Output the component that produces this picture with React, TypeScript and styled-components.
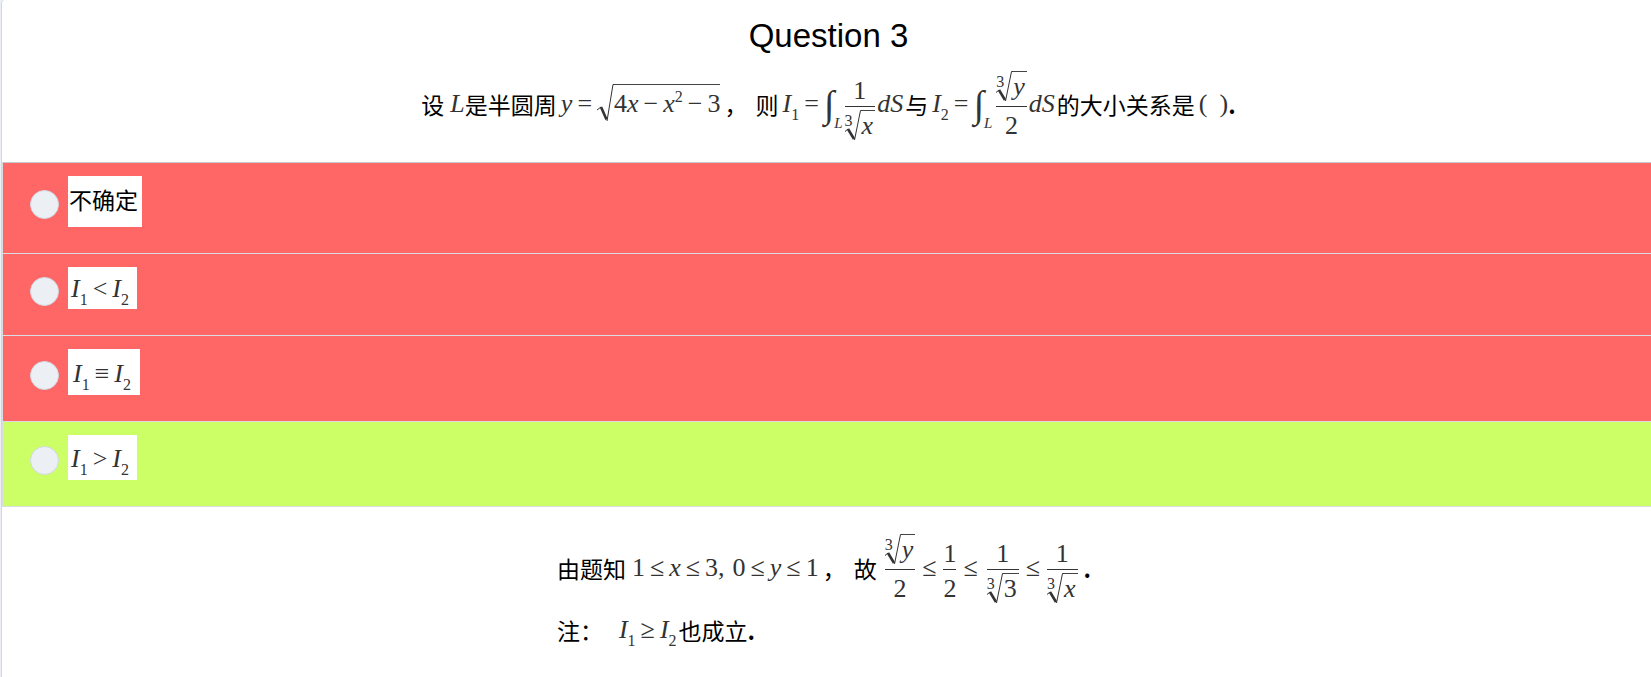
import React from 'react';
import styled, { createGlobalStyle } from 'styled-components';

const GlobalStyle = createGlobalStyle`
  * { box-sizing: border-box; }
  body {
    margin: 0;
    background: #ecf0f5;
    color: #000;
    font-family: "Liberation Sans", Arial, sans-serif;
    overflow-x: hidden;
  }
`;

const Panel = styled.main`
  min-height: 100vh;
  margin-left: 1px;
  border-left: 1px solid #d2d6de;
  border-top-left-radius: 4px;
  background: #fff;
`;

const Header = styled.header`
  display: flex;
  flex-direction: column;
  align-items: center;
  padding: 17px 0 13px 4px;
`;

const Title = styled.h1`
  margin: 0;
  font-size: 33px;
  font-weight: 400;
  line-height: 38px;
`;

const MathLine = styled.div`
  display: flex;
  align-items: center;
  white-space: nowrap;
  font-family: "Liberation Serif", "Noto Sans CJK SC", serif;
  font-size: 26px;
  line-height: 30px;
  color: #333;
`;

const QuestionLine = styled(MathLine)`
  min-height: 94px;
  padding-top: 4px;
`;

const Cjk = styled.span`
  font-family: "Noto Sans CJK SC", sans-serif;
  font-size: 23px;
  font-weight: 400;
  color: #000;
`;

const Stop = styled(Cjk)`
  font-weight: 700;
`;

const Var = styled.i`
  font-style: italic;
`;

const Rel = styled.span`
  margin: 0 5px;
`;

const Space = styled.span<{ $w: number }>`
  flex: none;
  width: ${(p) => p.$w}px;
`;

const Sub = styled.span`
  font-size: 16px;
  line-height: 0;
  vertical-align: -8px;
`;

const Sup = styled.span`
  font-size: 16px;
  line-height: 0;
  vertical-align: 10px;
`;

const RootBox = styled.span`
  display: inline-flex;
  align-items: flex-start;
`;

const FractionBox = styled.span`
  display: inline-grid;
  grid-template-rows: 1fr 1px 1fr;
  justify-items: center;
  padding-top: 4px;
`;

const Numerator = styled.span`
  display: flex;
  align-self: end;
  ${RootBox} { padding-bottom: 4px; }
`;

const Denominator = styled.span`
  display: flex;
  align-self: start;
  padding-top: 4px;
  ${RootBox} { margin-top: -4px; }
`;

const Bar = styled.span`
  justify-self: stretch;
  background: #333;
`;

const Radicand = styled.span<{ $tall?: boolean }>`
  border-top: 1px solid #444;
  padding: ${(p) => (p.$tall ? '4px 0 5px' : '0')};
`;

const CubeRadicand = styled(Radicand)`
  margin-top: 3px;
  padding-right: 2px;
`;

const RootIndex = styled.span`
  width: 8px;
  margin: 6px -8px 0 0;
  font-size: 16px;
  line-height: 16px;
`;

const Integral = styled.span`
  display: inline-flex;
  align-items: center;
`;

const IntegralSign = styled.span`
  font-size: 38px;
  line-height: 44px;
`;

const Limit = styled.i`
  margin-top: 38px;
  font-size: 15px;
  line-height: 15px;
`;

const Options = styled.fieldset`
  margin: 0;
  padding: 0;
  border: 0;
  border-top: 1px solid #c8cccf;
  border-left: 1px solid #d9dce0;
`;

const Option = styled.label<{ $correct?: boolean }>`
  display: flex;
  align-items: center;
  padding: 13px 27px 26px;
  border-bottom: 1px solid #d9dce0;
  background: ${(p) => (p.$correct ? '#ccff66' : '#ff6666')};
`;

const Radio = styled.input`
  appearance: none;
  flex: none;
  width: 29px;
  height: 29px;
  margin: 6px 9px 0 0;
  border: 1px solid #cfd8e2;
  border-radius: 50%;
  background: #ecf0f5;
  &:checked { background: #b4bfcc; }
`;

const Tile = styled(MathLine)<{ $pad: string }>`
  padding: ${(p) => p.$pad};
  background: #fff;
`;

const Explanation = styled.section`
  display: flex;
  justify-content: center;
  padding: 20px 0 0 3px;
`;

const ExplanationBody = styled.div`
  padding-right: 8px;
`;

const NoteLine = styled(MathLine)`
  margin-top: 7px;
`;

function Fraction({ top, bottom }: { top: React.ReactNode; bottom: React.ReactNode }) {
  return (
    <FractionBox>
      <Numerator>{top}</Numerator>
      <Bar />
      <Denominator>{bottom}</Denominator>
    </FractionBox>
  );
}

function CubeRoot({ children }: { children: React.ReactNode }) {
  return (
    <RootBox>
      <RootIndex>3</RootIndex>
      <svg width="17" height="34" viewBox="0 0 17 34" fill="none" stroke="#333">
        <path d="M0 24.500L3 22" strokeWidth="1" />
        <path d="M3 22L9 32" strokeWidth="2.600" />
        <path d="M9.500 33L15.500 3.500H17" strokeWidth="1" />
      </svg>
      <CubeRadicand>{children}</CubeRadicand>
    </RootBox>
  );
}

function SquareRoot({ children }: { children: React.ReactNode }) {
  return (
    <RootBox>
      <svg width="17" height="38" viewBox="0 0 17 38" fill="none" stroke="#333">
        <path d="M0 26L4 23" strokeWidth="1" />
        <path d="M4 23L9.500 35.500" strokeWidth="2.600" />
        <path d="M10 37L16 .5H17" strokeWidth="1" />
      </svg>
      <Radicand $tall>{children}</Radicand>
    </RootBox>
  );
}

function LineIntegral() {
  return (
    <Integral>
      <IntegralSign>∫</IntegralSign>
      <Limit>L</Limit>
    </Integral>
  );
}

function I({ n }: { n: number }) {
  return (
    <span>
      <Var>I</Var>
      <Sub>{n}</Sub>
    </span>
  );
}

function Compare({ sign }: { sign: string }) {
  return (
    <>
      <I n={1} />
      <Rel>{sign}</Rel>
      <I n={2} />
    </>
  );
}

const options = [
  { id: 'unsure', pad: '8px 4px 13px 1px', body: <Cjk>不确定</Cjk> },
  { id: 'less', pad: '7px 8px 5px 3px', body: <Compare sign="<" /> },
  { id: 'same', pad: '10px 9px 6px 5px', body: <Compare sign="≡" /> },
  { id: 'greater', pad: '9px 8px 6px 3px', body: <Compare sign=">" />, correct: true },
];

export default function App() {
  return (
    <>
      <GlobalStyle />
      <Panel>
        <Header>
          <Title>Question 3</Title>
          <QuestionLine>
            <Cjk>设</Cjk>
            <Space $w={6} />
            <Var>L</Var>
            <Cjk>是半圆周</Cjk>
            <Space $w={4} />
            <Var>y</Var>
            <Rel>=</Rel>
            <SquareRoot>
              4<Var>x</Var>
              <Rel>−</Rel>
              <Var>x</Var>
              <Sup>2</Sup>
              <Rel>−</Rel>3
            </SquareRoot>
            <Space $w={4} />
            <Cjk>，</Cjk>
            <Space $w={8} />
            <Cjk>则</Cjk>
            <Space $w={4} />
            <I n={1} />
            <Rel>=</Rel>
            <LineIntegral />
            <Space $w={2} />
            <Fraction top="1" bottom={<CubeRoot><Var>x</Var></CubeRoot>} />
            <Space $w={2} />
            <Var>dS</Var>
            <Space $w={2} />
            <Cjk>与</Cjk>
            <Space $w={4} />
            <I n={2} />
            <Rel>=</Rel>
            <LineIntegral />
            <Space $w={4} />
            <Fraction top={<CubeRoot><Var>y</Var></CubeRoot>} bottom="2" />
            <Space $w={2} />
            <Var>dS</Var>
            <Space $w={2} />
            <Cjk>的大小关系是</Cjk>
            <Space $w={4} />
            <span>(</span>
            <Space $w={12} />
            <span>)</span>
            <Stop>.</Stop>
          </QuestionLine>
        </Header>

        <Options aria-label="Question 3">
          {options.map((o) => (
            <Option key={o.id} $correct={o.correct}>
              <Radio type="radio" name="answer" value={o.id} />
              <Tile as="span" $pad={o.pad}>{o.body}</Tile>
            </Option>
          ))}
        </Options>

        <Explanation>
          <ExplanationBody>
            <MathLine>
              <Cjk>由题知</Cjk>
              <Space $w={6} />
              <span>1</span>
              <Rel>≤</Rel>
              <Var>x</Var>
              <Rel>≤</Rel>
              <span>3,</span>
              <Space $w={8} />
              <span>0</span>
              <Rel>≤</Rel>
              <Var>y</Var>
              <Rel>≤</Rel>
              <span>1</span>
              <Space $w={4} />
              <Cjk>，</Cjk>
              <Space $w={8} />
              <Cjk>故</Cjk>
              <Space $w={8} />
              <Fraction top={<CubeRoot><Var>y</Var></CubeRoot>} bottom="2" />
              <Space $w={2} />
              <Rel>≤</Rel>
              <Space $w={2} />
              <Fraction top="1" bottom="2" />
              <Space $w={2} />
              <Rel>≤</Rel>
              <Space $w={4} />
              <Fraction top="1" bottom={<CubeRoot>3</CubeRoot>} />
              <Space $w={2} />
              <Rel>≤</Rel>
              <Space $w={2} />
              <Fraction top="1" bottom={<CubeRoot><Var>x</Var></CubeRoot>} />
              <Space $w={6} />
              <Stop>.</Stop>
            </MathLine>
            <NoteLine>
              <Cjk>注：</Cjk>
              <Space $w={16} />
              <Compare sign="≥" />
              <Space $w={2} />
              <Cjk>也成立</Cjk>
              <Stop>.</Stop>
            </NoteLine>
          </ExplanationBody>
        </Explanation>
      </Panel>
    </>
  );
}
